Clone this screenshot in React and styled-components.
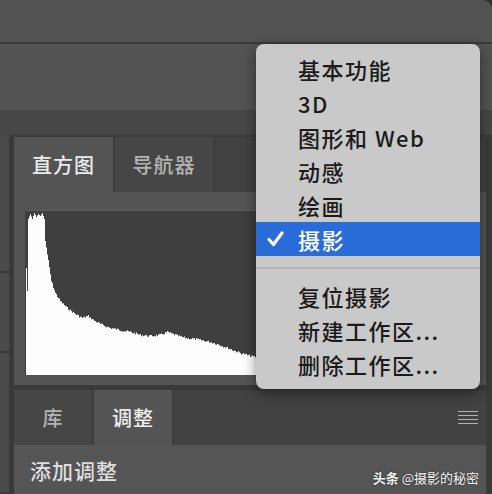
import React from 'react';
import styled, { createGlobalStyle } from 'styled-components';

const GlobalStyle = createGlobalStyle`
  html, body {
    margin: 0;
    padding: 0;
    background: #2e2e2e;
    overflow: hidden;
  }
  * {
    box-sizing: border-box;
  }
`;

const FONT = `"Noto Sans CJK SC", "Liberation Sans", sans-serif`;

// rough outline of the histogram, in px inside the box
const KEYS = [
  [3, 8], [5, 3], [7, 8], [9, 2], [11, 6], [13, 3], [15, 5], [17, 2], [19, 8],
  [20, 30], [23, 50], [26, 70], [30, 82], [35, 90], [42, 97], [50, 103],
  [57, 107], [63, 105], [68, 109], [75, 113], [85, 117], [95, 119],
  [105, 121], [115, 124], [125, 125], [135, 124], [142, 121], [150, 124],
  [160, 127], [170, 128], [185, 131], [195, 134], [205, 138], [215, 142],
  [225, 145], [240, 148], [260, 150], [300, 153], [350, 156], [400, 158],
  [448, 160],
];

const buildHistogram = () => {
  let seed = 7;
  const rnd = () => {
    seed = (seed * 9301 + 49297) % 233280;
    return seed / 233280;
  };
  const pts = ['1,165', '1,57', '2,57', '2,80', '3,80'];
  for (let i = 0; i < KEYS.length - 1; i++) {
    const [x0, y0] = KEYS[i];
    const [x1, y1] = KEYS[i + 1];
    for (let x = x0; x < x1; x++) {
      const t = (x - x0) / (x1 - x0);
      const y = y0 + (y1 - y0) * t + (x > 20 ? (rnd() - 0.5) * 2.4 : 0);
      pts.push(`${x},${y.toFixed(1)}`);
      pts.push(`${x + 1},${y.toFixed(1)}`);
    }
  }
  pts.push('448,165');
  return pts.join(' ');
};

const HIST = buildHistogram();

const MENU = [
  { label: '基本功能' },
  { label: '3D' },
  { label: '图形和 Web' },
  { label: '动感' },
  { label: '绘画' },
  { label: '摄影', checked: true },
  { sep: true },
  { label: '复位摄影' },
  { label: '新建工作区...' },
  { label: '删除工作区...' },
];

export default function App() {
  return (
    <Screen>
      <GlobalStyle />
      <TitleBar />
      <OptionsBar />
      <DockStrip />
      <Workspace>
        <SideStrip>
          <SideBlock h={138} />
          <SideBlock h={80} />
          <SideBlock grow />
        </SideStrip>
        <PanelColumn>
          <PanelGroup>
            <TabRow>
              <Tab w={99} active>直方图</Tab>
              <Tab w={98}>导航器</Tab>
              <TabFill />
            </TabRow>
            <HistBody>
              <HistogramBox>
                <svg width="448" height="165" viewBox="0 0 448 165">
                  <polygon points={HIST} fill="#fdfdfd" />
                </svg>
              </HistogramBox>
            </HistBody>
          </PanelGroup>
          <PanelGroup>
            <TabRow>
              <Tab w={78}>库</Tab>
              <Tab w={78} active>调整</Tab>
              <TabFill>
                <Hamburger>
                  <span />
                  <span />
                  <span />
                  <span />
                </Hamburger>
              </TabFill>
            </TabRow>
            <AdjustBody>
              <AdjustTitle>添加调整</AdjustTitle>
              <Watermark>
                <b>头条</b> @摄影的秘密
              </Watermark>
            </AdjustBody>
          </PanelGroup>
        </PanelColumn>
        <RightStrip />
      </Workspace>

      <Menu>
        {MENU.map((item, i) =>
          item.sep ? (
            <Separator key={i} />
          ) : (
            <MenuItem key={i} selected={item.checked}>
              {item.checked && (
                <Check width="17" height="16" viewBox="0 0 17 16">
                  <path
                    d="M2 8.5 L6.5 13.5 L15 2"
                    fill="none"
                    stroke="#fff"
                    strokeWidth="3.2"
                    strokeLinecap="round"
                    strokeLinejoin="round"
                  />
                </Check>
              )}
              {item.label}
            </MenuItem>
          )
        )}
      </Menu>
    </Screen>
  );
}

const Screen = styled.div`
  position: relative;
  width: 492px;
  height: 494px;
  display: flex;
  flex-direction: column;
  font-family: ${FONT};
  background: #2e2e2e;
  overflow: hidden;
`;

const TitleBar = styled.div`
  height: 44px;
  background: #525252;
  border-bottom: 2px solid #3b3b3b;
  border-top-right-radius: 9px;
`;

const OptionsBar = styled.div`
  height: 66px;
  background: #535353;
`;

const DockStrip = styled.div`
  height: 25px;
  background: #474747;
`;

const Workspace = styled.div`
  flex: 1;
  display: flex;
  background: #3a3a3a;
`;

const SideStrip = styled.div`
  width: 13px;
  display: flex;
  flex-direction: column;
  border-right: 4px solid #393939;
  background: #393939;
`;

const SideBlock = styled.div`
  height: ${p => (p.h ? `${p.h}px` : 'auto')};
  flex: ${p => (p.grow ? 1 : 'none')};
  background: #4b4b4b;
  border-bottom: 2px solid #3a3a3a;
`;

const PanelColumn = styled.div`
  flex: 1;
  display: flex;
  flex-direction: column;
  gap: 5px;
  padding: 2px 0 0 1px;
`;

const PanelGroup = styled.div`
  display: flex;
  flex-direction: column;
`;

const TabRow = styled.div`
  height: 55px;
  display: flex;
  gap: 2px;
  background: #3c3c3c;
`;

const Tab = styled.div`
  width: ${p => p.w}px;
  display: flex;
  align-items: center;
  justify-content: center;
  font-size: 20px;
  font-weight: 500;
  letter-spacing: 1px;
  color: ${p => (p.active ? '#ececec' : '#b3b3b3')};
  background: ${p => (p.active ? '#545454' : '#464646')};
`;

const TabFill = styled.div`
  flex: 1;
  display: flex;
  align-items: center;
  justify-content: flex-end;
  padding-right: 8px;
  background: #424242;
`;

const Hamburger = styled.div`
  width: 20px;
  display: flex;
  flex-direction: column;
  gap: 2.5px;
  span {
    display: block;
    height: 1.5px;
    background: #b0b0b0;
  }
`;

const HistBody = styled.div`
  height: 193px;
  background: #545454;
  padding: 18px 12px 0 11px;
`;

const HistogramBox = styled.div`
  height: 165px;
  background: #3f3f3f;
  border-top: 1px solid #5c5c5c;
  overflow: hidden;
  svg {
    display: block;
  }
`;

const AdjustBody = styled.div`
  height: 49px;
  display: flex;
  align-items: center;
  justify-content: space-between;
  padding: 0 7px 0 16px;
  background: #555555;
`;

const AdjustTitle = styled.div`
  font-size: 21px;
  font-weight: 500;
  letter-spacing: 1px;
  color: #dedede;
`;

const Watermark = styled.div`
  align-self: flex-end;
  margin-bottom: 7px;
  font-size: 13px;
  color: #f4f4f4;
  text-shadow: 0 0 2px rgba(0, 0, 0, 0.6);
  b {
    font-weight: 700;
  }
`;

const RightStrip = styled.div`
  width: 6px;
  background: #3a3a3a;
`;

const Menu = styled.div`
  position: absolute;
  top: 44px;
  left: 256px;
  width: 224px;
  padding: 8px 0 8px;
  background: #c9c9c9;
  border-radius: 8px;
  box-shadow: 0 4px 14px rgba(0, 0, 0, 0.45);
`;

const MenuItem = styled.div`
  position: relative;
  height: 34px;
  display: flex;
  align-items: center;
  padding-left: 42px;
  font-size: 22px;
  font-weight: 500;
  letter-spacing: 1.5px;
  color: ${p => (p.selected ? '#ffffff' : '#1b1b1b')};
  background: ${p => (p.selected ? '#2b6dd8' : 'transparent')};
`;

const Check = styled.svg`
  position: absolute;
  left: 11px;
  top: 9px;
`;

const Separator = styled.div`
  height: 23px;
  display: flex;
  align-items: center;
  &::after {
    content: '';
    flex: 1;
    height: 2px;
    background: #b3b3b3;
  }
`;
